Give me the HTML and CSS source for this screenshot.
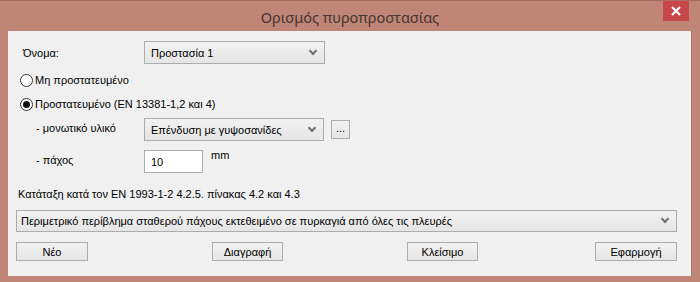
FILE: index.html
```html
<!DOCTYPE html>
<html lang="el">
<head>
    <meta charset="UTF-8">
    <title>Ορισμός πυροπροστασίας</title>
    <link rel="stylesheet" href="styles.css">
</head>
<body>
    <div class="window">
        <div class="titlebar">
            <span class="title">Ορισμός πυροπροστασίας</span>
            <div class="close">
                <svg width="10" height="10" viewBox="0 0 10 10"><path d="M1 1L9 9M9 1L1 9" stroke="#fff" stroke-width="2"/></svg>
            </div>
        </div>
        <div class="client">
            <div class="row row-name">
                <span class="label">Όνομα:</span>
                <div class="combo combo-name"><span>Προστασία 1</span><i class="chev"></i></div>
            </div>
            <div class="radio radio-1"><span class="dot"></span>Μη προστατευμένο</div>
            <div class="radio radio-2"><span class="dot on"></span>Προστατευμένο (EN 13381-1,2 και 4)</div>
            <div class="row row-mat">
                <span class="label sub">- μονωτικό υλικό</span>
                <div class="combo combo-mat"><span>Επένδυση με γυψοσανίδες</span><i class="chev"></i></div>
                <div class="btn-dots">...</div>
            </div>
            <div class="row row-thick">
                <span class="label sub">- πάχος</span>
                <div class="textbox">10</div>
                <span class="unit">mm</span>
            </div>
            <div class="note">Κατάταξη κατά τον EN 1993-1-2 4.2.5. πίνακας 4.2 και 4.3</div>
            <div class="combo combo-wide"><span>Περιμετρικό περίβλημα σταθερού πάχους εκτεθειμένο σε πυρκαγιά από όλες τις πλευρές</span><i class="chev"></i></div>
            <div class="buttons">
                <div class="btn b-new">Νέο</div>
                <div class="btn b-del">Διαγραφή</div>
                <div class="btn b-close">Κλείσιμο</div>
                <div class="btn b-apply">Εφαρμογή</div>
            </div>
        </div>
    </div>
</body>
</html>
```
FILE: styles.css
```css
* {
    box-sizing: border-box;
}
body {
    margin: 0;
    background: #bf8577;
}
.window {
    width: 700px;
    height: 282px;
    background: #bf8577;
    border-top: 1px solid #a66d61;
    padding: 0 8px;
    font-family: "Liberation Sans", Arial, sans-serif;
    font-size: 11px;
    color: #000;
}
.titlebar {
    height: 30px;
    position: relative;
    display: flex;
    justify-content: center;
    align-items: center;
}
.title {
    font-family: "Noto Sans", "Open Sans", sans-serif;
    font-size: 14.5px;
    color: #45342f;
    margin-top: 1px;
}
.close {
    position: absolute;
    right: 3px;
    top: 0;
    width: 26px;
    height: 20px;
    background: #c7474a;
    display: flex;
    align-items: center;
    justify-content: center;
}
.client {
    height: 245px;
    background: #f0f0f0;
    border-right: 1px solid #a9766b;
    padding: 10px 0 0 0;
}
.row {
    display: flex;
    align-items: center;
}
.label {
    width: 136px;
    padding-left: 15px;
}
.label.sub {
    padding-left: 28px;
    align-self: flex-start;
    padding-top: 4px;
}
.combo {
    height: 23px;
    border: 1px solid #acacac;
    background: linear-gradient(#f2f2f2, #e5e5e5);
    display: flex;
    align-items: center;
    justify-content: space-between;
    padding: 0 8px 0 6px;
}
.chev {
    width: 6px;
    height: 6px;
    border-right: 2px solid #707070;
    border-bottom: 2px solid #707070;
    transform: rotate(45deg);
    margin-top: -4px;
}
.combo-name {
    width: 181px;
}
.radio {
    display: flex;
    align-items: center;
    height: 16px;
    padding-left: 12px;
}
.radio-1 {
    margin-top: 8px;
}
.radio-2 {
    margin-top: 8px;
}
.dot {
    width: 13px;
    height: 13px;
    border: 1px solid #333;
    border-radius: 50%;
    background: #fff;
    margin-right: 2px;
    display: flex;
    align-items: center;
    justify-content: center;
}
.dot.on::after {
    content: "";
    width: 7px;
    height: 7px;
    border-radius: 50%;
    background: #111;
}
.row-mat {
    margin-top: 6px;
    height: 23px;
}
.combo-mat {
    width: 180px;
}
.btn-dots {
    width: 19px;
    height: 19px;
    margin-left: 7px;
    border: 1px solid #acacac;
    background: linear-gradient(#f2f2f2, #e5e5e5);
    text-align: center;
    line-height: 15px;
    font-size: 11px;
}
.row-thick {
    margin-top: 9px;
    height: 23px;
    align-items: flex-start;
}
.textbox {
    width: 59px;
    height: 23px;
    border: 1px solid #abadb3;
    background: #fff;
    padding: 5px 0 0 6px;
}
.unit {
    margin-left: 8px;
    margin-top: -1px;
}
.note {
    margin-top: 15px;
    padding-left: 10px;
    height: 14px;
}
.combo-wide {
    margin: 8px 0 0 8px;
    width: 661px;
    height: 22px;
    padding-left: 4px;
}
.buttons {
    display: flex;
    margin: 10px 0 0 8px;
}
.btn {
    height: 19px;
    border: 1px solid #acacac;
    background: linear-gradient(#f2f2f2, #e5e5e5);
    display: flex;
    align-items: center;
    justify-content: center;
}
.b-new {
    width: 72px;
}
.b-del {
    width: 71px;
    margin-left: 124px;
}
.b-close {
    width: 71px;
    margin-left: 124px;
}
.b-apply {
    width: 82px;
    margin-left: 117px;
}
```
